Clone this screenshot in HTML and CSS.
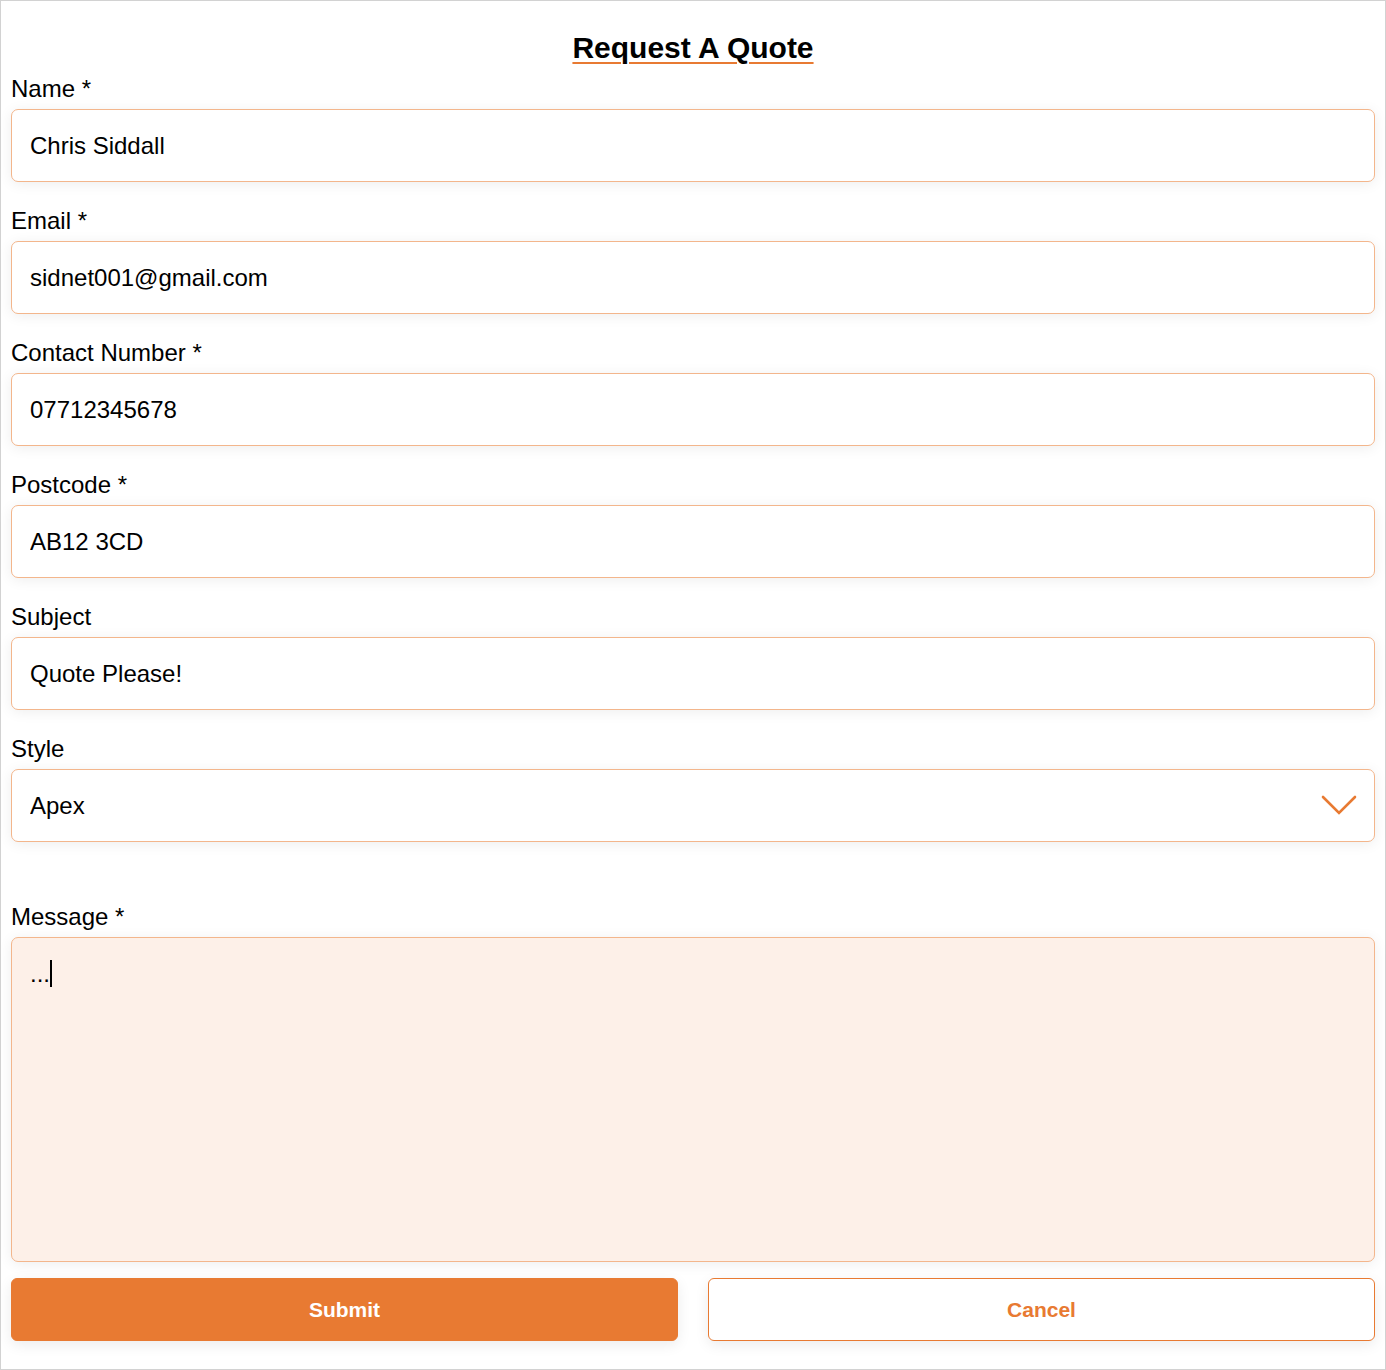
FILE: index.html
```html
<!DOCTYPE html>
<html lang="en">
<head>
<meta charset="utf-8">
<title>Request A Quote</title>
<link rel="stylesheet" href="styles.css">
</head>
<body>
<form class="page">
  <h1 class="title">Request A Quote</h1>

  <div class="field">
    <label class="label">Name *</label>
    <input class="input" type="text" value="Chris Siddall">
  </div>

  <div class="field">
    <label class="label">Email *</label>
    <input class="input" type="text" value="sidnet001@gmail.com">
  </div>

  <div class="field">
    <label class="label">Contact Number *</label>
    <input class="input" type="text" value="07712345678">
  </div>

  <div class="field">
    <label class="label">Postcode *</label>
    <input class="input" type="text" value="AB12 3CD">
  </div>

  <div class="field">
    <label class="label">Subject</label>
    <input class="input" type="text" value="Quote Please!">
  </div>

  <div class="field field-spaced">
    <label class="label">Style</label>
    <div class="select-wrap">
      <select class="input select">
        <option>Apex</option>
      </select>
      <svg class="chevron" width="36" height="22" viewBox="0 0 36 22" aria-hidden="true">
        <polyline points="2,3 18,19 34,3" fill="none" stroke="#e87a32" stroke-width="2.6" stroke-linecap="round" stroke-linejoin="miter"/>
      </svg>
    </div>
  </div>

  <div class="field field-message">
    <label class="label">Message *</label>
    <div class="textarea" role="textbox">...<span class="caret"></span></div>
  </div>

  <div class="actions">
    <button type="button" class="btn btn-primary">Submit</button>
    <button type="button" class="btn btn-outline">Cancel</button>
  </div>
</form>
</body>
</html>
```

FILE: styles.css
```css
* {
  box-sizing: border-box;
}

html, body {
  margin: 0;
  padding: 0;
  background: #ffffff;
}

body {
  font-family: "Liberation Sans", Arial, sans-serif;
  color: #000;
}

.page {
  width: 1386px;
  height: 1370px;
  border: 1px solid #d2d2d2;
  padding: 29px 10px 0 10px;
  display: flex;
  flex-direction: column;
}

.title {
  margin: 0 0 9px 0;
  font-size: 30px;
  line-height: 36px;
  font-weight: 700;
  text-align: center;
  text-decoration: underline;
  text-decoration-color: #e87a32;
  text-decoration-thickness: 2px;
  text-underline-offset: 4px;
}

.field {
  display: flex;
  flex-direction: column;
  margin-bottom: 25px;
}

.field-spaced {
  margin-bottom: 61px;
}

.field-message {
  margin-bottom: 16px;
}

.label {
  font-size: 24px;
  line-height: 28px;
  margin-bottom: 6px;
}

.input {
  height: 73px;
  width: 100%;
  border: 1px solid #f3b68c;
  border-radius: 7px;
  background: #fff;
  padding: 0 18px;
  font-family: "Liberation Sans", Arial, sans-serif;
  font-size: 24px;
  color: #000;
  box-shadow: 0 2px 14px rgba(0, 0, 0, 0.07);
  outline: none;
}

.select-wrap {
  position: relative;
}

.select {
  appearance: none;
  -webkit-appearance: none;
}

.chevron {
  position: absolute;
  right: 18px;
  top: 25px;
  pointer-events: none;
}

.textarea {
  height: 325px;
  border: 1px solid #f3b68c;
  border-radius: 7px;
  background: #fdf0e8;
  padding: 21px 18px;
  font-size: 24px;
  line-height: 30px;
  box-shadow: 0 2px 14px rgba(0, 0, 0, 0.07);
}

.caret {
  display: inline-block;
  width: 2px;
  height: 27px;
  background: #000;
  vertical-align: -5px;
  margin-left: 0;
}

.actions {
  display: flex;
  gap: 30px;
}

.btn {
  flex: 1;
  height: 63px;
  border-radius: 6px;
  font-family: "Liberation Sans", Arial, sans-serif;
  font-size: 21px;
  font-weight: 700;
  cursor: pointer;
  box-shadow: 0 4px 14px rgba(0, 0, 0, 0.08);
}

.btn-primary {
  background: #e87a32;
  border: 1px solid #e87a32;
  color: #fff;
}

.btn-outline {
  background: #fff;
  border: 1px solid #e87a32;
  color: #e87a32;
}
```
